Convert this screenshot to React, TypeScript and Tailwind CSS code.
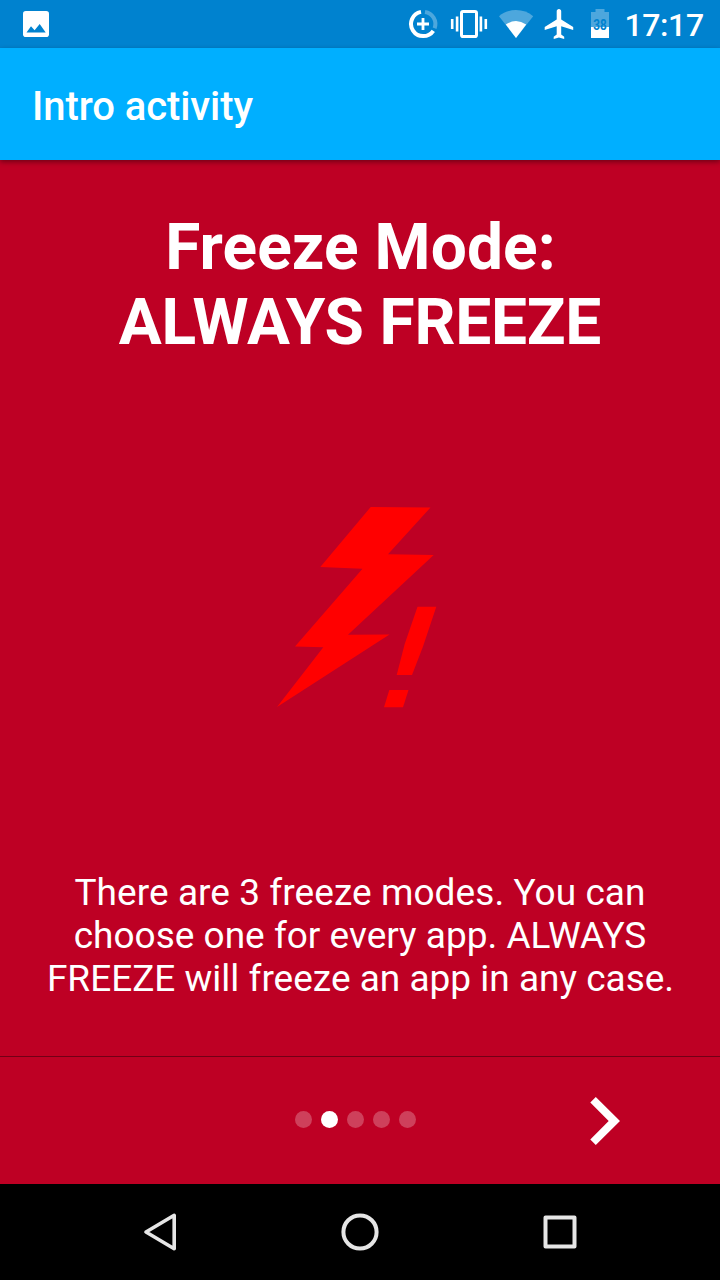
function StatusBar() {
  return (
    <header className="flex h-12 shrink-0 items-center bg-[#0082cf] text-white">
      <svg className="ml-[23px] h-[26px] w-[26px]" viewBox="0 0 26 26">
        <rect width="26" height="26" rx="2.8" fill="#fff" />
        <path d="M3.5 21.5 8 15.2l3.6 4 5.1-6.2 6 8.5z" fill="#0082cf" />
      </svg>
      <svg className="ml-[359px] h-12 w-[192px]" viewBox="408 0 192 48" fill="none">
        <path d="M421 11.9A12.2 12.2 0 1 0 433.3 30.8" stroke="#fff" strokeWidth="4" />
        <path d="M425 11.9A12.2 12.2 0 0 1 434.6 28.2" stroke="#fff" strokeOpacity=".3" strokeWidth="4" />
        <path d="M423 18v12M417 24h12" stroke="#fff" strokeWidth="2.8" />
        <rect x="461.5" y="11.5" width="15" height="25" rx="1.6" stroke="#fff" strokeWidth="3" />
        <path d="M457.1 16.5v15M452.2 19v10M480.9 16.5v15M485.8 19v10" stroke="#fff" strokeWidth="2.6" />
        <path d="M499 16.2C508 8 524 8 533.2 16.2L516 38z" fill="#fff" fillOpacity=".3" />
        <path d="M505.8 24.5Q516 17.5 526.2 24.5L516 38z" fill="#fff" />
        <g transform="translate(541.7 6) scale(1.5)">
          <path
            d="M21 16v-2l-8-5V3.5c0-.83-.67-1.5-1.5-1.5S10 2.67 10 3.5V9l-8 5v2l8-2.5V19l-2 1.5V22l3.5-1 3.5 1v-1.5L13 19v-5.5l8 2.5z"
            fill="#fff"
          />
        </g>
      </svg>
      <div className="relative -mt-px -ml-[9px] h-[29px] w-[18px]">
        <svg className="h-full w-full" viewBox="0 0 18 29">
          <path d="M0 3h4.5V0h9v3H18v15H0z" fill="#fff" fillOpacity=".3" />
          <path d="M0 18h18v11H0z" fill="#fff" />
        </svg>
        <span className="absolute inset-x-0 top-[8px] flex origin-center scale-x-[0.84] justify-center text-[14px] leading-[16px] font-bold text-[#0082cf]">
          38
        </span>
      </div>
      <time className="mt-[2px] ml-[15.5px] text-[32px] leading-[38px] font-medium tracking-[-0.4px]">17:17</time>
    </header>
  );
}

function Bolt() {
  return (
    <svg className="mt-[146px] mr-[6px] h-[202px] w-[160px] self-center" viewBox="277 506 160 202" fill="#f00">
      <path d="M370.7 507 430.5 507.5 388 554.2 433.7 555 348 634.8 389.5 634.5 277 707 323.3 647.2 295 646.5 362.5 568.7 320.3 567z" />
      <path d="M417.5 606.7h18.8L423 646.5 412 675h-15.3l8-31z" />
      <path d="M389.3 690h19.2L403 707.2h-19z" />
    </svg>
  );
}

const PAGES = [0, 1, 2, 3, 4];
const CURRENT = 1;

export default function App() {
  return (
    <div className="flex h-[1280px] w-[720px] flex-col overflow-hidden bg-[#be0024] font-['Roboto',sans-serif] text-white">
      <StatusBar />
      <div className="z-10 flex h-28 shrink-0 items-center bg-[#00afff] pl-8 shadow-[0_2px_5px_rgba(0,0,0,0.4)]">
        <h1 className="mt-[5px] text-[40px] leading-[47px] font-medium tracking-[-0.08px]">Intro activity</h1>
      </div>
      <main className="flex h-[896px] shrink-0 flex-col text-center">
        <h2 className="mt-[50px] text-[64px] leading-[75px] font-bold">
          <span className="block pl-px tracking-[0.08px]">Freeze Mode:</span>
          <span className="block tracking-[-0.22px]">ALWAYS FREEZE</span>
        </h2>
        <Bolt />
        <p className="mt-[163px] text-[37px] leading-[43px]">
          <span className="block tracking-[0.06px]">There are 3 freeze modes. You can</span>
          <span className="block">choose one for every app. ALWAYS</span>
          <span className="block pl-px">FREEZE will freeze an app in any case.</span>
        </p>
      </main>
      <nav className="flex h-32 shrink-0 items-center border-t border-[#720016]">
        <div className="mb-[3px] ml-[295px] flex gap-[9px]">
          {PAGES.map((page) => (
            <span
              key={page}
              className={page === CURRENT ? "h-[17px] w-[17px] rounded-full bg-white" : "h-[17px] w-[17px] rounded-full bg-white/25"}
            />
          ))}
        </div>
        <svg className="ml-[174px] h-12 w-[31px]" viewBox="590 1097 31 48" fill="#fff">
          <path d="M595.8 1097 620 1121l-24.2 24-5.5-5.6 18.4-18.4-18.4-18.4z" />
        </svg>
      </nav>
      <footer className="flex h-24 shrink-0 items-center justify-between bg-black px-[140px]">
        <svg className="h-10 w-10" viewBox="0 0 40 40" fill="none" stroke="#e6e6e6" strokeWidth="3.6" strokeLinejoin="round">
          <path d="M34.2 3.3v33.4L6 20z" />
        </svg>
        <svg className="h-10 w-10" viewBox="0 0 40 40" fill="none" stroke="#e6e6e6" strokeWidth="4">
          <circle cx="20" cy="20" r="16.6" />
        </svg>
        <svg className="h-10 w-10" viewBox="0 0 40 40" fill="none" stroke="#e6e6e6" strokeWidth="4" strokeLinejoin="round">
          <path d="M5.5 5.5h29v29h-29z" />
        </svg>
      </footer>
    </div>
  );
}
